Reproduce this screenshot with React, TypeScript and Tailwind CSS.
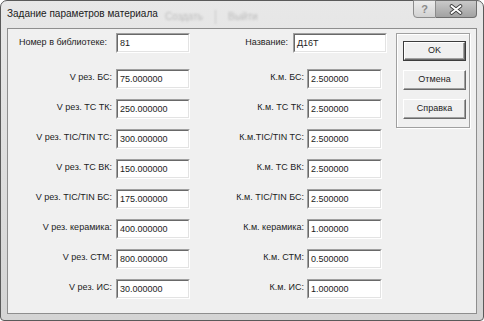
const rows = [
  ["V рез. БС:", "75.000000", "К.м. БС:", "2.500000"],
  ["V рез. ТС ТК:", "250.000000", "К.м. ТС ТК:", "2.500000"],
  ["V рез. TIC/TIN TC:", "300.000000", "К.м.TIC/TIN TC:", "2.500000"],
  ["V рез. ТС ВК:", "150.000000", "К.м. ТС ВК:", "2.500000"],
  ["V рез. TIC/TIN БС:", "175.000000", "К.м. TIC/TIN БС:", "2.500000"],
  ["V рез. керамика:", "400.000000", "К.м. керамика:", "1.000000"],
  ["V рез. СТМ:", "800.000000", "К.м. СТМ:", "0.500000"],
  ["V рез. ИС:", "30.000000", "К.м. ИС:", "1.000000"],
];

function Field({ value, className }: { value: string; className: string }) {
  return (
    <div
      className={`h-[20px] shrink-0 border border-t-[#a0a0a0] border-l-[#a0a0a0] border-b-white border-r-white ${className}`}
    >
      <div className="flex h-full items-center border border-t-[#696969] border-l-[#696969] border-b-[#e3e3e3] border-r-[#e3e3e3] bg-white pl-[2px] leading-none">
        {value}
      </div>
    </div>
  );
}

function Button({ label, isDefault }: { label: string; isDefault?: boolean }) {
  return (
    <div
      className={`h-[20px] w-[63px] ${isDefault ? "border border-[#3c3c3c]" : ""}`}
    >
      <div className="flex h-full items-center justify-center border border-t-white border-l-white border-b-[#696969] border-r-[#696969] bg-[#f0f0f0] shadow-[inset_-1px_-1px_0_#a0a0a0]">
        {label}
      </div>
    </div>
  );
}

export default function App() {
  return (
    <div className="h-[321px] w-[484px] bg-white font-['Liberation_Sans',Arial,sans-serif] text-[9px] text-[#1c1c1c]">
      <div className="relative flex h-full w-full flex-col rounded-t-[7px] rounded-b-[4px] border border-[#5a5a5a] bg-gradient-to-b from-[#e8e8e8] to-[#d4d4d4]">
        {/* blurred content behind the glass */}
        <div className="pointer-events-none absolute left-[164px] top-[8px] flex items-center gap-[12px] text-[10px] text-[#bcbcbc] blur-[1.2px]">
          <span>Создать</span>
          <span className="h-[14px] w-px bg-[#c8c8c8]" />
          <span>Выйти</span>
        </div>

        <div className="relative flex h-[27px] shrink-0 items-start justify-between pl-[6px] pr-[6px]">
          <span className="mt-[6px] text-[10px] leading-[14px] text-[#1a1a1a]">
            Задание параметров материала
          </span>
          <div className="-mt-px flex h-[18px]">
            <div className="flex w-[23px] items-center justify-center rounded-bl-[4px] border border-[#8c8c8c] bg-gradient-to-b from-[#ececec] to-[#d2d2d2] text-[11px] font-bold leading-none text-[#8a8a8a]">
              ?
            </div>
            <div className="flex w-[41px] items-center justify-center rounded-br-[4px] border border-l-0 border-[#6e6e6e] bg-gradient-to-b from-[#c9c9c9] to-[#a2a2a2]">
              <svg width="14" height="11" viewBox="0 0 14 11">
                <path d="M2.5 2 L11.5 9 M11.5 2 L2.5 9" stroke="#3a3a3a" strokeWidth="3.6" strokeLinecap="round" />
                <path d="M2.5 2 L11.5 9 M11.5 2 L2.5 9" stroke="#ffffff" strokeWidth="2" strokeLinecap="round" />
              </svg>
            </div>
          </div>
        </div>

        <div className="mx-[6px] flex h-[286px] shrink-0 border border-[#8e8e8e] bg-[#f0f0f0] pt-[4px]">
          <div className="flex w-[379px] flex-col">
            <div className="flex h-[20px] items-center">
              <span className="w-[99px] text-right">Номер в библиотеке:</span>
              <Field value="81" className="ml-[9px] w-[74px]" />
              <span className="w-[98px] text-right">Название:</span>
              <Field value="Д16Т" className="ml-[5px] w-[94px]" />
            </div>
            <div className="mt-[16px] flex flex-col gap-[10px]">
              {rows.map(([l1, v1, l2, v2]) => (
                <div key={l1} className="flex h-[20px] items-start">
                  <span className="w-[104px] pt-[2px] text-right leading-[12px]">{l1}</span>
                  <Field value={v1} className="ml-[4px] w-[74px]" />
                  <span className="w-[114px] pt-[2px] text-right leading-[12px]">{l2}</span>
                  <Field value={v2} className="ml-[3px] w-[75px]" />
                </div>
              ))}
            </div>
          </div>
          <div className="ml-[9px] flex h-[95px] w-[74px] flex-col gap-[9px] border border-[#a0a0a0] pl-[6px] pt-[7px] shadow-[inset_1px_1px_0_#fff,1px_1px_0_#fff]">
            <Button label="OK" isDefault />
            <Button label="Отмена" />
            <Button label="Справка" />
          </div>
        </div>
      </div>
    </div>
  );
}
